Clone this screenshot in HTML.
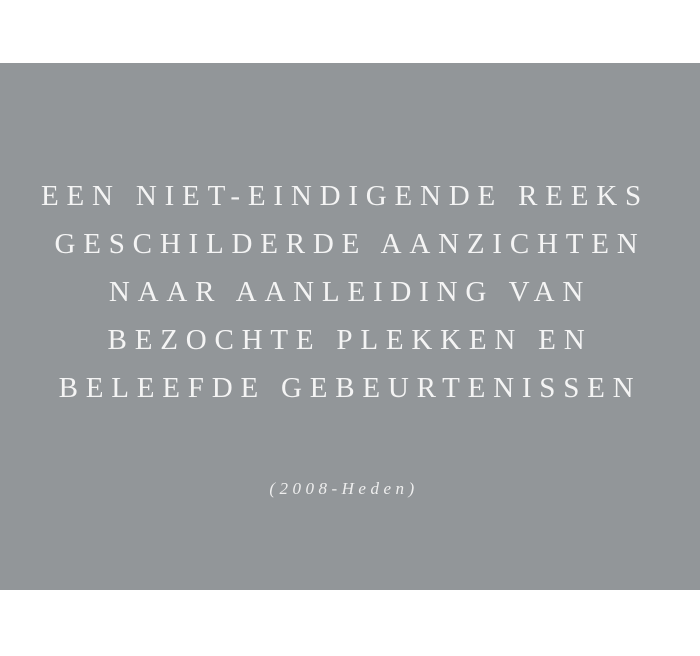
<!DOCTYPE html>
<html><head><style>
html,body{margin:0;padding:0;background:#fff;width:700px;height:656px;overflow:hidden}
.box{position:absolute;left:0;top:63px;width:700px;height:527px;background:#929699}
.t{position:absolute;left:0;width:700px;top:172px;text-align:center;color:#f4f4f4;font-family:"Liberation Serif",serif;font-size:29px;line-height:48px;letter-spacing:7.8px;text-indent:-10px}
.d{position:absolute;left:0;width:700px;top:479px;text-align:center;color:#eee;font-family:"Liberation Serif",serif;font-style:italic;font-size:17px;letter-spacing:4.5px;text-indent:-12px}
</style></head><body>
<div class="box"></div>
<div class="t">EEN NIET-EINDIGENDE REEKS<br>GESCHILDERDE AANZICHTEN<br>NAAR AANLEIDING VAN<br>BEZOCHTE PLEKKEN EN<br>BELEEFDE GEBEURTENISSEN</div>
<div class="d">(2008-Heden)</div>
</body></html>
